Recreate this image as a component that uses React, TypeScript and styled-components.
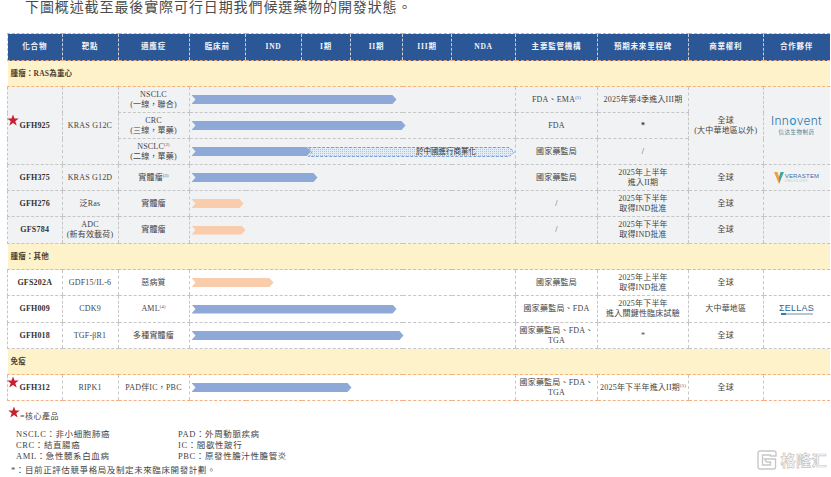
import React from "react";
import styled, { createGlobalStyle } from "styled-components";

const Global = createGlobalStyle`
  html, body { margin: 0; padding: 0; background: #fff; }
  body { font-family: "Liberation Serif", "Noto Sans CJK TC", serif; color: #444; }
  #root { width: 831px; height: 477px; overflow: hidden; position: relative; }
`;

const COLON = "\uFF1A";
const COMMA = "\uFF0C";

const Page = styled.div`
  width: 831px;
  height: 477px;
  position: relative;
  overflow: hidden;
`;
const Title = styled.p`
  margin: 0;
  padding: 0 0 0 25px;
  height: 33px;
  box-sizing: border-box;
  font-size: 14px;
  line-height: 15px;
  letter-spacing: 0.9px;
  color: #4a4a4a;
  white-space: nowrap;
`;
const Table = styled.table`
  margin-left: 7px;
  width: 822px;
  table-layout: fixed;
  border-collapse: collapse;
  font-size: 8px;
  line-height: 10px;
  letter-spacing: 0.2px;
`;
const Head = styled.th`
  box-sizing: border-box;
  height: 27px;
  padding: 0;
  background: #2b5797;
  color: #f2f4f8;
  font-size: 7.5px;
  font-weight: 700;
  letter-spacing: 0.8px;
  text-align: center;
  border-left: 1px dashed #c9ced8;
  border-top: 1px dashed #e9a877;
  border-bottom: 1px dashed #e9a877;
`;
const Section = styled.td`
  box-sizing: border-box;
  height: 26px;
  padding: 0 0 0 3px;
  background: #fef2cb;
  font-weight: 700;
  font-size: 7.5px;
  color: #4a4030;
  border-top: 1px dashed #f5b183;
  border-bottom: 1px dashed #f5b183;
`;
const BodyRow = styled.tr<{ $tall?: boolean }>`
  height: ${(p) => (p.$tall ? 27 : 26)}px;
`;
const Cell = styled.td<{ $grey?: boolean; $strong?: boolean; $lastOrange?: boolean }>`
  box-sizing: border-box;
  padding: 0;
  text-align: center;
  vertical-align: middle;
  background: ${(p) => (p.$grey ? "#f1f2f4" : "#fff")};
  font-weight: ${(p) => (p.$strong ? 700 : 400)};
  color: ${(p) => (p.$strong ? "#333" : "#444")};
  border-left: 1px dashed #c6c6c6;
  border-top: 1px dashed #c6c6c6;
  border-bottom: ${(p) => (p.$lastOrange ? "1px dashed #f5b183" : "1px dashed #c6c6c6")};
`;
const Track = styled(Cell)`
  text-align: left;
  padding-left: 2px;
`;
const Sup = styled.sup`
  font-size: 4.5px;
  line-height: 0;
  vertical-align: 3px;
`;
const Bar = styled.div<{ $w: number; $peach?: boolean }>`
  width: ${(p) => p.$w}px;
  height: 9px;
  background: ${(p) => (p.$peach ? "#f9cdab" : "#8ea9d8")};
  clip-path: polygon(0 0, calc(100% - 4px) 0, 100% 50%, calc(100% - 4px) 100%, 0 100%, 4px 50%);
`;
const SplitBar = styled.div`
  display: flex;
  align-items: center;
`;
const Planned = styled.div`
  position: relative;
  width: 207px;
  height: 10px;
  margin-left: -3px;
`;
const PlannedLabel = styled.span`
  position: absolute;
  left: 108px;
  top: 0;
  font-size: 7.5px;
  line-height: 10px;
  letter-spacing: 0;
  color: #333;
  white-space: nowrap;
`;
const StarWrap = styled.span`
  position: relative;
  display: inline-block;
`;
const StarMark = styled.svg`
  position: absolute;
  left: -12px;
  top: -7px;
  width: 12px;
  height: 12px;
`;
const starPoints = "12,1 15,9 23.5,9 16.5,14.5 19.5,23 12,18 4.5,23 7.5,14.5 0.5,9 9,9";
const Star = () => (
  <StarMark viewBox="0 0 24 24">
    <polygon points={starPoints} fill="#c8202f" />
  </StarMark>
);
const LogoStack = styled.div`
  display: flex;
  flex-direction: column;
  align-items: center;
`;
const InnoName = styled.span`
  font-family: "Inter", "Liberation Sans", sans-serif;
  font-size: 12px;
  line-height: 12px;
  font-weight: 300;
  letter-spacing: 0.3px;
  color: #34759f;
`;
const InnoO = styled.span`
  color: #1d9bd7;
  font-weight: 500;
`;
const InnoCn = styled.span`
  margin-top: 2px;
  font-family: "Noto Sans CJK SC", sans-serif;
  font-size: 5.5px;
  line-height: 7px;
  letter-spacing: 0.5px;
  color: #5d7f98;
`;
const VeraRow = styled.div`
  display: flex;
  align-items: center;
  justify-content: center;
  gap: 1px;
`;
const VeraText = styled.div`
  display: flex;
  flex-direction: column;
  text-align: left;
  font-family: "Liberation Sans", sans-serif;
`;
const VeraName = styled.span`
  font-size: 6px;
  line-height: 6px;
  letter-spacing: 0.2px;
  color: #3a6ea5;
`;
const VeraSub = styled.span`
  font-size: 3.5px;
  line-height: 4px;
  letter-spacing: 0.4px;
  color: #9fd0c4;
`;
const EllasName = styled.span`
  font-family: "Liberation Sans", sans-serif;
  font-size: 9px;
  line-height: 9px;
  letter-spacing: 0.2px;
  color: #2f5f8c;
`;
const EllasSub = styled.div`
  width: 32px;
  height: 2px;
  background: linear-gradient(90deg, #2f7fb0 0 16%, #b9c6d2 16% 100%);
`;
const Legend = styled.section`
  padding: 6px 0 0 8px;
  font-size: 8.5px;
  color: #444;
`;
const CoreLine = styled.div`
  display: flex;
  align-items: flex-end;
  height: 14px;
  font-size: 8px;
  letter-spacing: 0.5px;
`;
const CoreStar = styled.svg`
  width: 12px;
  height: 12px;
  margin-bottom: 3px;
`;
const Abbrs = styled.div`
  display: grid;
  grid-template-columns: 162px 200px;
  grid-auto-rows: 11px;
  margin: 8px 0 0 8px;
  line-height: 11px;
  letter-spacing: 0.6px;
`;
const Note = styled.div`
  margin: 3px 0 0 3px;
  line-height: 11px;
  letter-spacing: 0.6px;
`;
const Watermark = styled.div`
  position: absolute;
  right: 4px;
  bottom: 7px;
  display: flex;
  align-items: center;
  gap: 3px;
`;
const WmText = styled.span`
  font-family: "Noto Sans CJK SC", sans-serif;
  font-size: 15px;
  line-height: 20px;
  font-weight: 700;
  letter-spacing: 0.5px;
  color: #fff;
  -webkit-text-stroke: 0.7px #c4c4c4;
`;

const widths = [54.5, 56, 71, 56.5, 56, 49, 52, 49, 64, 82, 91, 74.5, 66.5];
const heads = ["化合物", "靶點", "適應症", "臨床前", "IND", "I期", "II期", "III期", "NDA", "主要監管機構", "預期未來里程碑", "商業權利", "合作夥伴"];

const Innovent = () => (
  <LogoStack>
    <InnoName>Inn<InnoO>o</InnoO>vent</InnoName>
    <InnoCn>信达生物制药</InnoCn>
  </LogoStack>
);
const Verastem = () => (
  <VeraRow>
    <svg width="10" height="12" viewBox="0 0 10 12">
      <polygon points="0,0 3.5,0 5,5 5,12" fill="#f0a040" />
      <polygon points="10,0 6.5,0 5,5 5,12" fill="#45a8a0" />
    </svg>
    <VeraText>
      <VeraName>VERASTEM</VeraName>
      <VeraSub>ONCOLOGY</VeraSub>
    </VeraText>
  </VeraRow>
);
const Ellas = () => (
  <LogoStack>
    <EllasName>ΣELLAS</EllasName>
    <EllasSub />
  </LogoStack>
);

const Lines = ({ a, b }: { a: React.ReactNode; b?: React.ReactNode }) => (
  <>
    {a}
    {b ? <><br />{b}</> : null}
  </>
);

type Row = {
  name: string; star?: boolean; tall?: boolean; target: React.ReactNode; ind: React.ReactNode;
  w: number; peach?: boolean; reg: React.ReactNode; mile: React.ReactNode; right: React.ReactNode; logo?: React.ReactNode;
};

const Compound = ({ row, rowSpan, grey, last }: { row: Row; rowSpan?: number; grey?: boolean; last?: boolean }) => (
  <Cell $grey={grey} $strong rowSpan={rowSpan} $lastOrange={last}>
    {row.star ? <StarWrap><Star />{row.name}</StarWrap> : row.name}
  </Cell>
);

const Simple = ({ row, grey, last }: { row: Row; grey?: boolean; last?: boolean }) => (
  <BodyRow $tall={row.tall}>
    <Compound row={row} grey={grey} last={last} />
    <Cell $grey={grey} $lastOrange={last}>{row.target}</Cell>
    <Cell $grey={grey} $lastOrange={last}>{row.ind}</Cell>
    <Track colSpan={6} $grey={grey} $lastOrange={last}><Bar $w={row.w} $peach={row.peach} /></Track>
    <Cell $grey={grey} $lastOrange={last}>{row.reg}</Cell>
    <Cell $grey={grey} $lastOrange={last}>{row.mile}</Cell>
    <Cell $grey={grey} $lastOrange={last}>{row.right}</Cell>
    <Cell $grey={grey} $lastOrange={last}>{row.logo}</Cell>
  </BodyRow>
);

const rasRows: Row[] = [
  { name: "GFH375", target: "KRAS G12D", ind: <>實體瘤<Sup>(3)</Sup></>, w: 126, reg: "國家藥監局", mile: <Lines a="2025年上半年" b="進入II期" />, right: "全球", logo: <Verastem /> },
  { name: "GFH276", target: "泛Ras", ind: "實體瘤", w: 52, peach: true, reg: "/", mile: <Lines a="2025年下半年" b="取得IND批准" />, right: "全球" },
  { name: "GFS784", tall: true, target: <Lines a="ADC" b="(新有效載荷)" />, ind: "實體瘤", w: 54, peach: true, reg: "/", mile: <Lines a="2025年下半年" b="取得IND批准" />, right: "全球" },
];
const otherRows: Row[] = [
  { name: "GFS202A", target: "GDF15/IL-6", ind: "惡病質", w: 82, peach: true, reg: "國家藥監局", mile: <Lines a="2025年上半年" b="取得IND批准" />, right: "全球" },
  { name: "GFH009", tall: true, target: "CDK9", ind: <>AML<Sup>(4)</Sup></>, w: 205, reg: "國家藥監局、FDA", mile: <Lines a="2025年下半年" b="進入關鍵性臨床試驗" />, right: "大中華地區", logo: <Ellas /> },
  { name: "GFH018", target: "TGF-βR1", ind: "多種實體瘤", w: 212, reg: <Lines a="國家藥監局、FDA、" b="TGA" />, mile: "*", right: "全球" },
];
const immune: Row = {
  name: "GFH312", star: true, target: "RIPK1", ind: `PAD伴IC${COMMA}PBC`, w: 160,
  reg: <Lines a="國家藥監局、FDA、" b="TGA" />, mile: <>2025年下半年進入II期<Sup>(5)</Sup></>, right: "全球",
};
const lead: Row = { name: "GFH925", star: true, target: "KRAS G12C", ind: "", w: 0, reg: "", mile: "", right: "" };

const PlannedBar = () => (
  <Planned>
    <svg width="207" height="10" viewBox="0 0 207 10">
      <defs>
        <pattern id="dots" width="2" height="2" patternUnits="userSpaceOnUse">
          <rect width="2" height="2" fill="#e3edf8" />
          <rect width="1" height="1" fill="#a9c6e8" />
        </pattern>
      </defs>
      <polygon points="0.5,0.5 201,0.5 206.5,5 201,9.5 0.5,9.5 4,5" fill="url(#dots)" stroke="#5f8fd0" strokeWidth="0.8" strokeDasharray="3 1.5" />
    </svg>
    <PlannedLabel>於中國進行商業化</PlannedLabel>
  </Planned>
);

export default function App() {
  return (
    <Page>
      <Global />
      <Title>下圖概述截至最後實際可行日期我們候選藥物的開發狀態。</Title>
      <Table>
        <colgroup>
          {widths.map((w, i) => <col key={i} style={{ width: w }} />)}
        </colgroup>
        <thead>
          <tr>{heads.map((h) => <Head key={h}>{h}</Head>)}</tr>
        </thead>
        <tbody>
          <tr><Section colSpan={13}>{`腫瘤${COLON}RAS為重心`}</Section></tr>
          <BodyRow>
            <Compound row={lead} rowSpan={3} grey />
            <Cell $grey rowSpan={3}>{lead.target}</Cell>
            <Cell $grey><Lines a="NSCLC" b={`(一線${COMMA}聯合)`} /></Cell>
            <Track colSpan={6} $grey><Bar $w={205} /></Track>
            <Cell $grey>FDA、EMA<Sup>(1)</Sup></Cell>
            <Cell $grey>2025年第4季進入III期</Cell>
            <Cell $grey rowSpan={3}><Lines a="全球" b="(大中華地區以外)" /></Cell>
            <Cell $grey rowSpan={3}><Innovent /></Cell>
          </BodyRow>
          <BodyRow>
            <Cell $grey><Lines a="CRC" b={`(三線${COMMA}單藥)`} /></Cell>
            <Track colSpan={6} $grey><Bar $w={214} /></Track>
            <Cell $grey>FDA</Cell>
            <Cell $grey $strong>*</Cell>
          </BodyRow>
          <BodyRow>
            <Cell $grey><Lines a={<>NSCLC<Sup>(2)</Sup></>} b={`(二線${COMMA}單藥)`} /></Cell>
            <Track colSpan={6} $grey>
              <SplitBar><Bar $w={120} /><PlannedBar /></SplitBar>
            </Track>
            <Cell $grey>國家藥監局</Cell>
            <Cell $grey>/</Cell>
          </BodyRow>
          {rasRows.map((r) => <Simple key={r.name} row={r} grey />)}
          <tr><Section colSpan={13}>{`腫瘤${COLON}其他`}</Section></tr>
          {otherRows.map((r) => <Simple key={r.name} row={r} />)}
          <tr><Section colSpan={13}>免疫</Section></tr>
          <Simple row={immune} last />
        </tbody>
      </Table>
      <Legend>
        <CoreLine>
          <CoreStar viewBox="0 0 24 24">
            <polygon points={starPoints} fill="#c8202f" />
          </CoreStar>
          =核心產品
        </CoreLine>
        <Abbrs>
          <span>{`NSCLC${COLON}非小細胞肺癌`}</span><span>{`PAD${COLON}外周動脈疾病`}</span>
          <span>{`CRC${COLON}結直腸癌`}</span><span>{`IC${COLON}間歇性跛行`}</span>
          <span>{`AML${COLON}急性髓系白血病`}</span><span>{`PBC${COLON}原發性膽汁性膽管炎`}</span>
        </Abbrs>
        <Note>{`*${COLON}目前正評估競爭格局及制定未來臨床開發計劃。`}</Note>
      </Legend>
      <Watermark>
        <svg width="20" height="20" viewBox="0 0 20 20" fill="none" stroke="#c8c8c8" strokeWidth="1.4">
          <path d="M3 1h14a2 2 0 0 1 2 2v3h-5.5v-1h-8v10h8v-3h-4l-2-3h11v8a2 2 0 0 1-2 2H3a2 2 0 0 1-2-2V3a2 2 0 0 1 2-2z" />
        </svg>
        <WmText>格隆汇</WmText>
      </Watermark>
    </Page>
  );
}
